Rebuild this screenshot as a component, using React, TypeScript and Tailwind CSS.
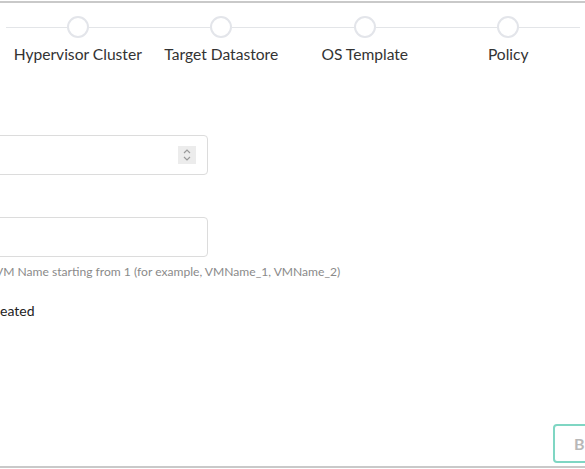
import React from "react";

const steps = ["Hypervisor Cluster", "Target Datastore", "OS Template", "Policy"];

function Step({ label }: { label: string }) {
  return (
    <div className="flex w-[143.5px] shrink-0 flex-col items-center">
      <div className="flex w-full items-center">
        <div className="h-px flex-1 bg-[#e3e5e8]" />
        <div className="h-[22px] w-[22px] rounded-full border-2 border-[#e3e5ea] bg-white" />
        <div className="h-px flex-1 bg-[#e3e5e8]" />
      </div>
      <div className="mt-[6px] whitespace-nowrap text-[15.6px] leading-[20px] text-[#333]">{label}</div>
    </div>
  );
}

export default function App() {
  return (
    <div
      className="flex h-[469px] w-[585px] flex-col overflow-hidden bg-white"
      style={{ fontFamily: "Lato, 'Noto Sans', sans-serif" }}
    >
      <div className="mt-px h-[2px] w-full shrink-0 bg-[#c9c9c9]" />
      <div className="mt-[13px] flex pl-[6px]">
        {steps.map((s) => (
          <Step key={s} label={s} />
        ))}
      </div>
      <div className="ml-[-40px] mt-[71px] flex flex-col">
        <div className="flex h-[40px] w-[248px] items-center justify-end rounded-[4px] border border-[#dcdcdc] pr-[11px]">
          <div className="flex h-[18px] w-[18px] flex-col items-center justify-center bg-[#ececec]">
            <svg width="10" height="14" viewBox="0 0 10 14" fill="none" stroke="#9a9a9a" strokeWidth="1.2">
              <path d="M2 5 L5 2 L8 5" />
              <path d="M2 9 L5 12 L8 9" />
            </svg>
          </div>
        </div>
        <div className="mt-[42px] h-[40px] w-[248px] rounded-[4px] border border-[#dcdcdc]" />
        <div className="ml-[35px] mt-[7px] whitespace-nowrap text-[12.1px] leading-[16px] text-[#8a8a8a]">
          VM Name starting from 1 (for example, VMName_1, VMName_2)
        </div>
      </div>
      <div className="mt-[22px] text-[14px] leading-[18px] text-[#222]">eated</div>
      <div className="flex flex-1 items-end justify-end pb-[3px]">
        <div className="mr-[-40px] flex h-[39px] w-[72px] items-center rounded-[4px] border-2 border-[#7fd6c3] pl-[19px] text-[16px] font-bold tracking-[1px] text-[#b8b8b8]">
          Back
        </div>
      </div>
      <div className="h-[2px] w-full shrink-0 bg-[#c9c9c9]" />
      <div className="h-px w-full shrink-0" />
    </div>
  );
}
